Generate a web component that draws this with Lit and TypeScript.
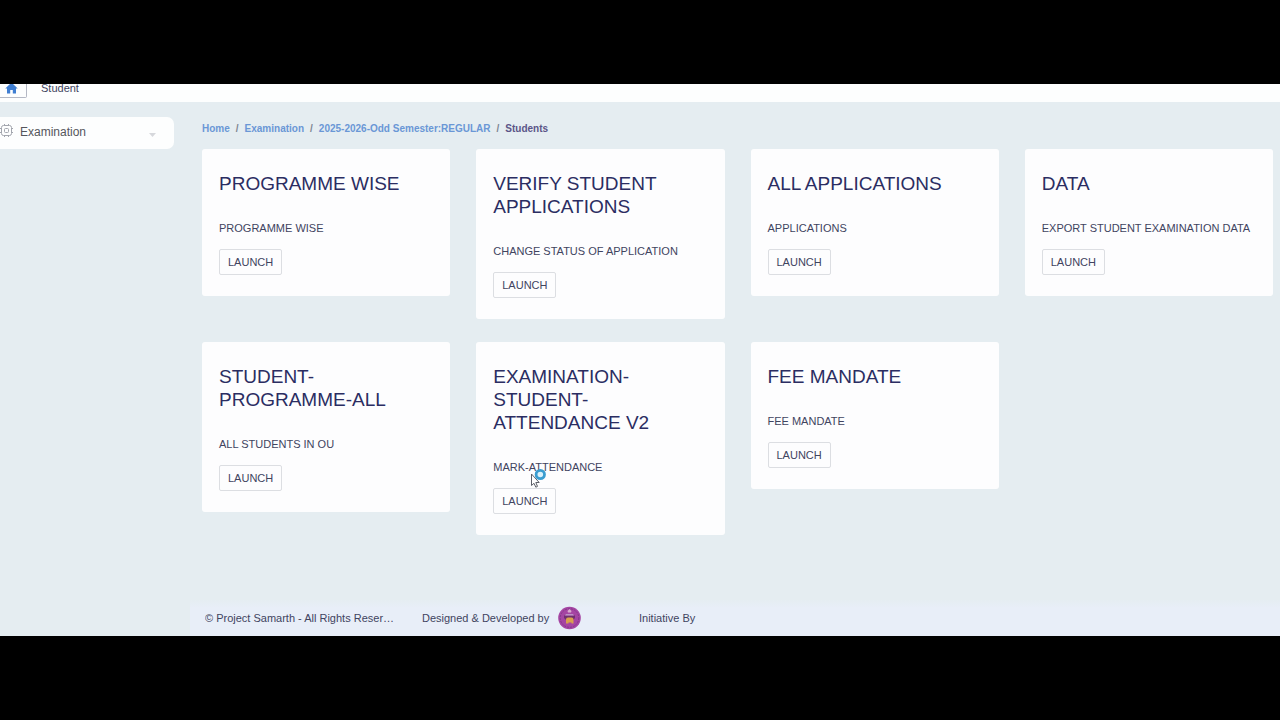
import { LitElement, html, css } from "lit";
import { customElement } from "lit/decorators.js";

interface Tile {
  title: string;
  text: string;
}

const TILES: Tile[] = [
  { title: "PROGRAMME WISE", text: "PROGRAMME WISE" },
  { title: "VERIFY STUDENT APPLICATIONS", text: "CHANGE STATUS OF APPLICATION" },
  { title: "ALL APPLICATIONS", text: "APPLICATIONS" },
  { title: "DATA", text: "EXPORT STUDENT EXAMINATION DATA" },
  { title: "STUDENT-PROGRAMME-ALL", text: "ALL STUDENTS IN OU" },
  { title: "EXAMINATION-STUDENT-ATTENDANCE V2", text: "MARK-ATTENDANCE" },
  { title: "FEE MANDATE", text: "FEE MANDATE" },
];

@customElement("app-root")
export class AppRoot extends LitElement {
  static styles = css`
    :host {
      display: flex;
      flex-direction: column;
      box-sizing: border-box;
      min-height: 100vh;
      padding: 84px 0;
      background: #000;
      color: #41445f;
      font-family: "Liberation Sans", Arial, sans-serif;
      font-size: 12px;
      line-height: 18px;
    }
    .topbar {
      display: flex;
      align-items: flex-end;
      gap: 14px;
      box-sizing: border-box;
      height: 18px;
      padding-bottom: 4px;
      overflow: hidden;
      background: #fdfefe;
    }
    .home {
      display: flex;
      align-items: flex-end;
      flex: none;
      box-sizing: border-box;
      width: 27px;
      height: 28px;
      padding: 0 0 3px 5px;
      border: 1px solid #b4b8c4;
      border-left: 0;
      border-radius: 0 2px 2px 0;
      background: #fdfefe;
    }
    .topbar-title {
      font-size: 11px;
      line-height: 20px;
    }
    .body {
      display: flex;
      flex: 1;
      background: #e5edf1;
    }
    .sidebar {
      flex: none;
      width: 174px;
      padding-top: 15px;
      margin-right: 16px;
    }
    .menu {
      display: flex;
      align-items: center;
      gap: 7px;
      box-sizing: border-box;
      width: 100%;
      height: 32px;
      padding: 0 16px 2px 0;
      border: 0;
      border-radius: 0 7px 7px 0;
      background: #fdfefe;
      color: #55565c;
      font: inherit;
      text-align: left;
    }
    .menu-label {
      flex: 1;
    }
    .menu-arrow {
      align-self: flex-end;
    }
    svg {
      display: block;
      flex: none;
    }
    .main {
      display: flex;
      flex-direction: column;
      flex: 1;
      min-width: 0;
    }
    .crumbs {
      display: flex;
      gap: 6px;
      padding: 18px 12px 11px;
      color: #7d8592;
      font-size: 10px;
      font-weight: bold;
    }
    .crumbs a {
      color: #6a97d6;
      text-decoration: none;
    }
    .current {
      color: #5b5588;
    }
    .tiles {
      display: grid;
      grid-template-columns: repeat(4, 1fr);
      align-items: start;
      gap: 23px 26px;
      padding: 0 7px 0 12px;
    }
    .tile {
      padding: 23px 17px 21px;
      border-radius: 3px;
      background: #fdfdfe;
    }
    .tile h2 {
      margin: 0 0 24px;
      color: #2b2d62;
      font-size: 19px;
      font-weight: normal;
      line-height: 23px;
    }
    .tile p {
      margin: 0 0 12px;
      font-size: 11px;
      white-space: nowrap;
    }
    .launch {
      display: block;
      height: 26px;
      padding: 0 8px;
      border: 1px solid #dcdee2;
      border-radius: 2px;
      background: #fdfdfe;
      color: #41445f;
      font-family: inherit;
      font-size: 11px;
    }
    .footer {
      display: grid;
      grid-template-columns: repeat(5, 1fr);
      align-items: center;
      height: 36px;
      margin-top: auto;
      padding-right: 5px;
      background: linear-gradient(#e5edf2, #e8eef8 8px);
      font-size: 11px;
    }
    .cell {
      display: flex;
      align-items: center;
      gap: 8px;
      min-width: 0;
      padding: 0 10px 0 15px;
    }
    .clip {
      overflow: hidden;
      text-overflow: ellipsis;
      white-space: nowrap;
    }
    .pointer {
      position: absolute;
      left: 530px;
      top: 467px;
      pointer-events: none;
    }
  `;

  render() {
    return html`
      <header class="topbar">
        <button class="home" aria-label="Home">
          <svg width="13" height="12" viewBox="0 0 13 12">
            <path
              fill="#3f7ed2"
              d="M6.5 .5 12.7 6.6H11V11.5H7.8V8H5.2V11.5H2V6.6H.3Z"
            />
          </svg>
        </button>
        <span class="topbar-title">Student</span>
      </header>
      <div class="body">
        <nav class="sidebar">
          <button class="menu">
            <svg
              width="13"
              height="16"
              viewBox="0 0 13 16"
              fill="none"
              stroke="#a3a6ae"
            >
              <rect x="1.500" y="1.500" width="10" height="10" rx="2" />
              <rect x="4.500" y="4.500" width="4" height="4" rx="1" />
              <path
                d="M4.500 0V1.500M8.500 0V1.500M4.500 11.500V13M8.500 11.500V13M0 4.500H1.500M0 8.500H1.500M11.500 4.500H13M11.500 8.500H13"
              />
            </svg>
            <span class="menu-label">Examination</span>
            <svg class="menu-arrow" width="11" height="18" viewBox="0 0 11 18">
              <path fill="#d6d8dc" d="M2 4h7L5.5 8Z" />
            </svg>
          </button>
        </nav>
        <div class="main">
          <nav class="crumbs" aria-label="Breadcrumb">
            <a href="#home">Home</a><span>/</span>
            <a href="#examination">Examination</a><span>/</span>
            <a href="#semester">2025-2026-Odd Semester:REGULAR</a><span>/</span>
            <span class="current">Students</span>
          </nav>
          <main class="tiles">
            ${TILES.map(
              (tile) => html`
                <section class="tile">
                  <h2>${tile.title}</h2>
                  <p>${tile.text}</p>
                  <button class="launch">LAUNCH</button>
                </section>
              `
            )}
          </main>
          <footer class="footer">
            <div class="cell">
              <span class="clip">© Project Samarth - All Rights Reserved</span>
            </div>
            <div class="cell">
              <span>Designed &amp; Developed by</span>
              <svg width="24" height="24" viewBox="0 0 24 24">
                <circle cx="12.500" cy="12" r="11.300" fill="#a545a3" />
                <circle
                  cx="12.500"
                  cy="12"
                  r="9.300"
                  fill="none"
                  stroke="#86378c"
                  stroke-dasharray="2 1"
                />
                <path fill="#d9a9cf" d="M10.500 5 12.500 3l2 2-.5 1.500h-3Z" />
                <path fill="#70306f" d="M7 9.500h11v2.500l-2 2H9l-2-2Z" />
                <path fill="#bd91c6" d="M9 8h7l1 1.500H8Z" />
                <path
                  fill="#d9a04e"
                  d="M9 13.500q0-2 2-2h3.500q2 0 2 2v4h-2V16.500h-3v1H9Z"
                />
              </svg>
            </div>
            <div class="cell"><span>Initiative By</span></div>
          </footer>
        </div>
      </div>
      <svg class="pointer" width="18" height="22" viewBox="0 0 18 22">
        <path
          fill="#fff"
          stroke="#5c5f68"
          d="M1.500 7V18.500L4 16.300 5.800 20.200 7.500 19.400 5.800 15.500H9.200Z"
        />
        <circle
          cx="10.300"
          cy="7.500"
          r="4.200"
          fill="#d9f1fb"
          stroke="#3a9dd0"
          stroke-width="2.800"
        />
      </svg>
    `;
  }
}
